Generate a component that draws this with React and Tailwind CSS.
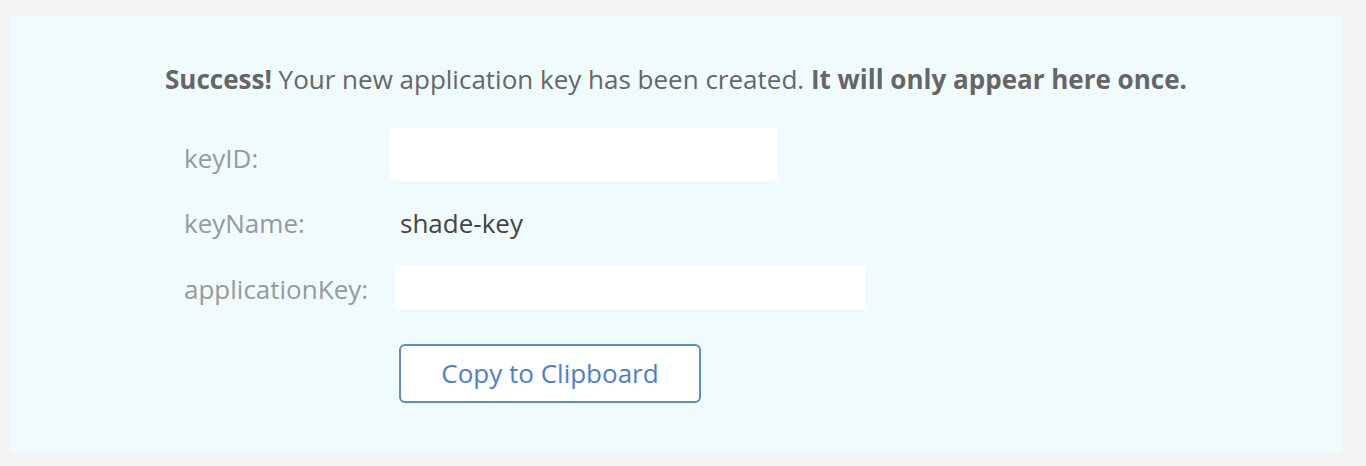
export default function App() {
  return (
    <div className="min-h-[466px] bg-[#f4f4f4] pt-[15px] pl-[10px] pr-[24px] pb-[13px] font-['Open_Sans',sans-serif]">
      <div className="h-[438px] bg-[#effbfd] pt-[46px]">
        <p className="text-center text-[26px] leading-[36px] text-[#666666]">
          <span className="font-bold">Success!</span> Your new application key has been created.{" "}
          <span className="font-bold">It will only appear here once.</span>
        </p>

        <div className="ml-[174px] mt-[31px] flex flex-col">
          <div className="flex items-center h-[53px]">
            <span className="w-[205px] pt-[8px] text-[26px] text-[#999999]">keyID:</span>
            <div className="w-[388px] h-[53px] bg-white" />
          </div>
          <div className="flex items-center h-[84px]">
            <span className="w-[216px] text-[26px] text-[#999999]">keyName:</span>
            <span className="text-[26px] text-[#444444]">shade-key</span>
          </div>
          <div className="flex items-center h-[44px]">
            <span className="w-[211px] pt-[4px] text-[26px] text-[#999999]">applicationKey:</span>
            <div className="w-[470px] h-[44px] bg-white" />
          </div>
          <div className="mt-[35px] ml-[215px]">
            <button
              type="button"
              className="w-[302px] h-[59px] rounded-[6px] border-2 border-[#5b8bd0] bg-white text-[26px] text-[#4a80cc]"
            >
              Copy to Clipboard
            </button>
          </div>
        </div>
      </div>
    </div>
  );
}
